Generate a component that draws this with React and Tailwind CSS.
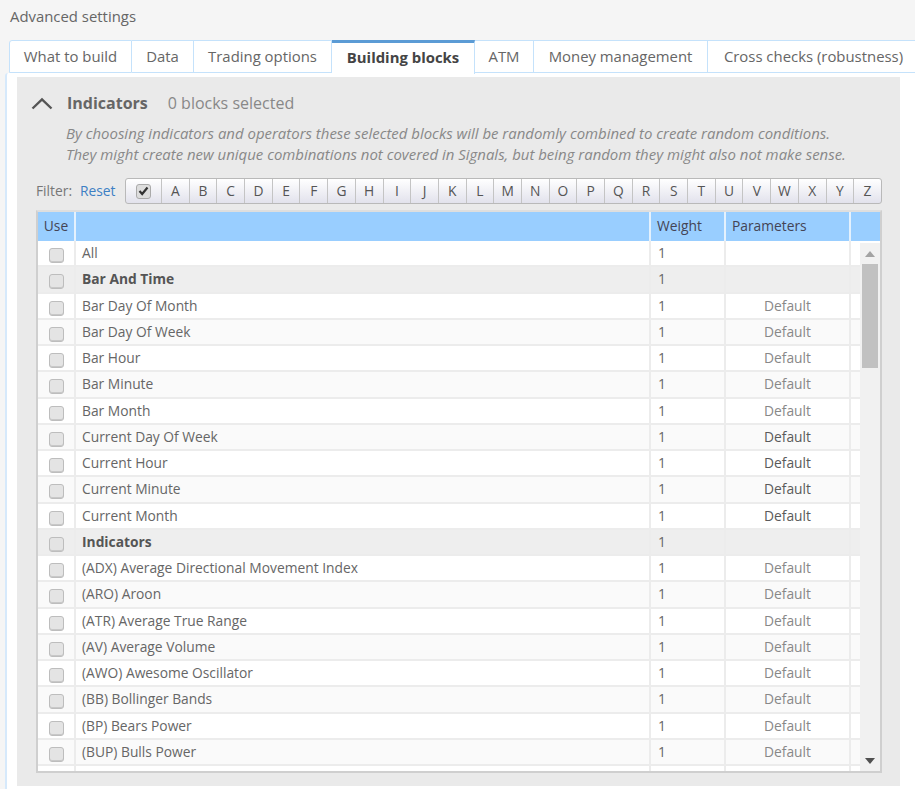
import React from 'react';

const TABS = [
    { label: 'What to build', w: 'w-[123px]' },
    { label: 'Data', w: 'w-[62px]' },
    { label: 'Trading options', w: 'w-[138px]' },
    { label: 'Building blocks', w: 'w-[143px]', active: true },
    { label: 'ATM', w: 'w-[59px]' },
    { label: 'Money management', w: 'w-[174px]' },
    { label: 'Cross checks (robustness)', w: 'w-[212px]' },
];

const LETTERS = 'ABCDEFGHIJKLMNOPQRSTUVWXYZ'.split('');

const ROWS = [
    { name: 'All', params: '' },
    { name: 'Bar And Time', group: true },
    { name: 'Bar Day Of Month', params: 'Default' },
    { name: 'Bar Day Of Week', params: 'Default' },
    { name: 'Bar Hour', params: 'Default' },
    { name: 'Bar Minute', params: 'Default' },
    { name: 'Bar Month', params: 'Default' },
    { name: 'Current Day Of Week', params: 'Default', dark: true },
    { name: 'Current Hour', params: 'Default', dark: true },
    { name: 'Current Minute', params: 'Default', dark: true },
    { name: 'Current Month', params: 'Default', dark: true },
    { name: 'Indicators', group: true },
    { name: '(ADX) Average Directional Movement Index', params: 'Default' },
    { name: '(ARO) Aroon', params: 'Default' },
    { name: '(ATR) Average True Range', params: 'Default' },
    { name: '(AV) Average Volume', params: 'Default' },
    { name: '(AWO) Awesome Oscillator', params: 'Default' },
    { name: '(BB) Bollinger Bands', params: 'Default' },
    { name: '(BP) Bears Power', params: 'Default' },
    { name: '(BUP) Bulls Power', params: 'Default' },
    { name: '', params: '' },
];

const Checkbox = () => (
    <span className="block w-[15px] h-[15px] rounded-[3px] border border-[#bdbdbd] bg-[#e4e4e4] shadow-[inset_0_-1px_0_#c8c8c8]"></span>
);

const App = () => {
    return (
        <div className="w-[915px] h-[789px] overflow-hidden bg-[#f5f5f5] font-['Open_Sans',sans-serif] text-[13.8px] text-[#666]">
            <div className="h-10 pl-2.5 pt-[6px] leading-5 text-[14.9px] text-[#666]">Advanced settings</div>

            {/* Tabs */}
            <div className="flex pl-[9px] h-[33px] text-[14.9px]">
                {TABS.map(tab => (
                    <div
                        key={tab.label}
                        className={`shrink-0 ${tab.w} flex items-center justify-center whitespace-nowrap border-r border-[#c5e2fb] ${
                            tab.active
                                ? 'bg-white font-bold text-[#444] border-t-[3px] border-t-[#5b9bd5] h-[34px] pb-[3px] z-10'
                                : 'bg-white border-t border-t-[#c5e2fb] border-b border-b-[#c5e2fb] first:border-l first:border-l-[#c5e2fb] first:rounded-tl-[3px]'
                        }`}
                    >
                        {tab.label}
                    </div>
                ))}
            </div>

            {/* Tab content */}
            <div className="ml-[5px] h-[716px] bg-white border-l-2 border-[#d6e9fb] rounded-tl-[3px] pl-[10px] pt-1 pr-[15px]">
                <div className="h-[709px] bg-[#eaeaea] pl-[19px] pr-[18px]">
                    <div className="flex items-center h-[52px] -ml-[5px]">
                        <svg width="22" height="13" viewBox="0 0 22 13" className="shrink-0 text-[#555]">
                            <path d="M1.5 11.5 L11 2.5 L20.5 11.5" fill="none" stroke="currentColor" strokeWidth="2.4" />
                        </svg>
                        <span className="ml-[14px] font-bold text-[16px] text-[#666]">Indicators</span>
                        <span className="ml-5 text-[16px] text-[#888]">0 blocks selected</span>
                    </div>
                    <div className="pl-[30px] -mt-[6px] italic text-[14.95px] leading-[21px] text-[#888] whitespace-nowrap">
                        <p>By choosing indicators and operators these selected blocks will be randomly combined to create random conditions.</p>
                        <p>They might create new unique combinations not covered in Signals, but being random they might also not make sense.</p>
                    </div>

                    {/* Filter */}
                    <div className="flex items-center h-[26px] mt-[13px]">
                        <span className="w-11 text-[#777]">Filter:</span>
                        <span className="w-[45px] text-[#3d80c4]">Reset</span>
                        <div className="flex flex-1 h-[26px] rounded-[3px] border border-[#b9b9b9] bg-gradient-to-b from-white to-[#e2e2ec] overflow-hidden">
                            <div className="w-[36px] shrink-0 flex items-center justify-center border-r border-[#c4c4c4]">
                                <span className="flex items-center justify-center w-[15px] h-[15px] rounded-[3px] border border-[#aaa] bg-[#ddd]">
                                    <svg width="11" height="10" viewBox="0 0 11 10">
                                        <path d="M1.5 5 L4.2 8 L9.5 1.5" fill="none" stroke="#333" strokeWidth="2.2" />
                                    </svg>
                                </span>
                            </div>
                            {LETTERS.map(letter => (
                                <div key={letter} className="flex-1 flex items-center justify-center border-r border-[#c4c4c4] last:border-r-0 text-[#555]">
                                    {letter}
                                </div>
                            ))}
                        </div>
                    </div>

                    {/* Table */}
                    <div className="relative mt-[6px] h-[563px] border-2 border-[#cfcfcf] border-t-[#dedede] bg-white overflow-hidden">
                        <div className="flex h-[29px] bg-[#99ceff] text-[#445] leading-[28px]">
                            <div className="w-[38px] shrink-0 text-center border-r-2 border-[#e4f1fd]">Use</div>
                            <div className="w-[575px] shrink-0 border-r-2 border-[#e4f1fd]"></div>
                            <div className="w-[75px] shrink-0 pl-[6px] border-r-2 border-[#e4f1fd]">Weight</div>
                            <div className="w-[125px] shrink-0 pl-[6px] border-r-2 border-[#e4f1fd]">Parameters</div>
                            <div className="flex-1"></div>
                        </div>
                        {ROWS.map((row, i) => (
                            <div
                                key={i}
                                className={`flex h-[26.25px] border-b-2 border-[#ececec] leading-[23px] ${row.group ? 'bg-[#eeeeee]' : i % 2 ? 'bg-[#fafafa]' : 'bg-white'}`}
                            >
                                <div className="w-[38px] shrink-0 flex items-center justify-center pt-[5px] border-r-2 border-[#ececec]">
                                    <Checkbox />
                                </div>
                                <div className={`w-[575px] shrink-0 pl-[6px] border-r-2 border-[#ececec] ${row.group ? 'font-bold text-[#555]' : ''}`}>
                                    {row.name}
                                </div>
                                <div className="w-[75px] shrink-0 pl-[7px] border-r-2 border-[#ececec]">{row.name ? 1 : ''}</div>
                                <div className={`w-[125px] shrink-0 text-center border-r-2 border-[#ececec] ${row.dark ? 'text-[#5a5a5a]' : 'text-[#888]'}`}>
                                    {row.params}
                                </div>
                                <div className="flex-1"></div>
                            </div>
                        ))}

                        {/* Scrollbar over the rows */}
                        <div className="absolute right-0 top-[31px] bottom-0 w-[20px] bg-[#f1f1f1] flex flex-col items-center">
                            <div className="h-[21px] flex items-center justify-center">
                                <svg width="10" height="6" viewBox="0 0 10 6"><path d="M0 6 L5 0 L10 6 Z" fill="#a3a3a3" /></svg>
                            </div>
                            <div className="w-[16px] h-[104px] bg-[#c1c1c1]"></div>
                            <div className="flex-1"></div>
                            <div className="h-[20px] flex items-center justify-center">
                                <svg width="10" height="6" viewBox="0 0 10 6"><path d="M0 0 L5 6 L10 0 Z" fill="#505050" /></svg>
                            </div>
                        </div>
                    </div>
                </div>
            </div>
        </div>
    );
};

export default App;
